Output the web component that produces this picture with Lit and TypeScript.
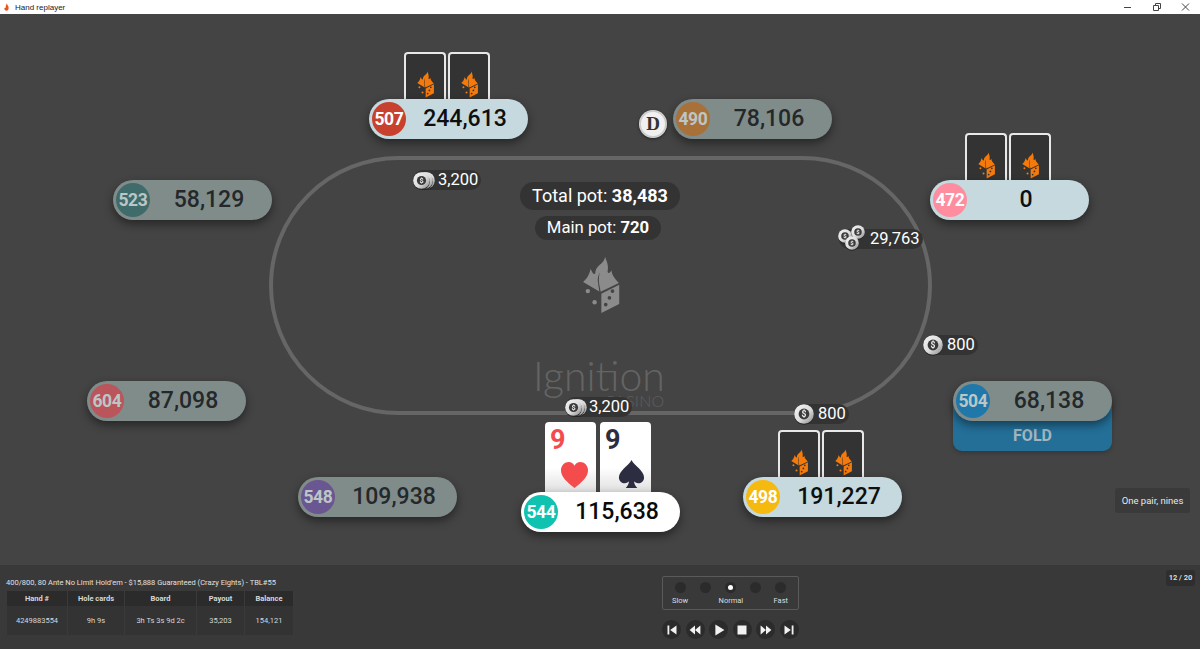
import { LitElement, html, css, svg } from "lit";
import { customElement } from "lit/decorators.js";

const hole = (x: number, y: number, r: number) =>
  `M${x - r} ${y}a${r} ${r} 0 1 0 ${2 * r} 0a${r} ${r} 0 1 0 ${-2 * r} 0Z`;

const logoPath =
  "M68 95C78 86 86 76 90 56C96 70 100 74 104 70C104 56 112 48 122 40C128 34 132 28 133 20C138 34 144 46 141 60C139 70 146 72 152 60C154 74 158 80 174 98L120 124L115 97C114 88 115 78 117 66C112 78 110 88 112 96L116 123Z";
const facePath =
  "M122 130L175 103L175 160L122 187Z" + hole(155, 122, 5.5) + hole(146, 142, 5.5) + hole(135, 162, 5.5);

const logo = svg`<path d=${logoPath} fill-rule="evenodd"/><path d=${facePath} fill-rule="evenodd"/><circle cx="82" cy="122" r="6.5"/><circle cx="102" cy="155" r="6.5"/>`;

interface Seat { id: string; amt: string; x: number; y: number; c: string; kind: "on" | "dim" | "hero"; backs?: boolean; fold?: boolean }
const seats: Seat[] = [
  { id: "507", amt: "244,613", x: 369, y: 85, c: "#c8402e", kind: "on", backs: true },
  { id: "490", amt: "78,106", x: 673, y: 85, c: "#a8713a", kind: "dim" },
  { id: "523", amt: "58,129", x: 113, y: 166, c: "#3f6b6b", kind: "dim" },
  { id: "472", amt: "0", x: 930, y: 166, c: "#ff8d9f", kind: "on", backs: true },
  { id: "604", amt: "87,098", x: 87, y: 367, c: "#b9555b", kind: "dim" },
  { id: "504", amt: "68,138", x: 953, y: 367, c: "#1f78a9", kind: "dim", fold: true },
  { id: "548", amt: "109,938", x: 298, y: 463, c: "#6a5690", kind: "dim" },
  { id: "498", amt: "191,227", x: 743, y: 463, c: "#f6b90f", kind: "on", backs: true },
  { id: "544", amt: "115,638", x: 521, y: 478, c: "#10c3b1", kind: "hero" },
];

interface Bet { amt: string; x: number; y: number; size: number; chips: number[][]; pad: number }
const bets: Bet[] = [
  { amt: "3,200", x: 413, y: 156, size: 17, chips: [[5, 2], [3, 2], [0, 2]], pad: 25 },
  { amt: "3,200", x: 565, y: 383, size: 17, chips: [[5, 2], [3, 2], [0, 2]], pad: 24 },
  { amt: "29,763", x: 839, y: 215, size: 14, chips: [[12, -4], [-1, 0], [6, 7]], pad: 31 },
  { amt: "800", x: 923, y: 321, size: 20, chips: [[0, 0]], pad: 24 },
  { amt: "800", x: 794, y: 390, size: 20, chips: [[0, 0]], pad: 24 },
];

const cols = ["Hand #", "Hole cards", "Board", "Payout", "Balance"];
const vals = ["4249883554", "9h 9s", "3h Ts 3s 9d 2c", "35,203", "154,121"];
const speeds = [false, false, true, false, false];

const ctrl = [
  "M5 5h2v10H5zM15 5v10L8 10z",
  "M10 5v10L4 10zM16 5v10l-6-5z",
  "M6 4l10 6-10 6z",
  "M5 5h10v10H5z",
  "M4 5v10l6-5zM10 5v10l6-5z",
  "M13 5h2v10h-2zM5 5v10l7-5z",
];

@customElement("app-root")
export class AppRoot extends LitElement {
  static styles = css`
    :host { display: flex; flex-direction: column; width: 1200px; height: 649px; overflow: hidden; font-family: Roboto, sans-serif; background: #444; }
    .title { height: 14px; flex: none; background: #fff; display: flex; align-items: center; padding-left: 4px; gap: 6px; font: 8px "Liberation Sans", sans-serif; color: #222; }
    .title .ico { width: 5px; height: 8px; fill: #e8541c; }
    .wins { margin-left: auto; display: flex; align-items: center; }
    .wins svg { width: 29px; height: 12px; stroke: #444; fill: none; stroke-width: 1; }
    .table { position: relative; height: 551px; flex: none; background: #444; overflow: hidden; }
    .oval { position: absolute; left: 269px; top: 142px; width: 663px; height: 259px; box-sizing: border-box; border: 4px solid #666; border-radius: 130px; }
    .mark { position: absolute; left: 578px; top: 242px; width: 46px; height: 58px; fill: #8b8b8b; }
    .brand { position: absolute; left: 533px; top: 338px; font: 300 41px/48px Lato, sans-serif; color: #646464; }
    .casino { position: absolute; left: 604px; top: 377px; font: 300 16px/20px Lato, sans-serif; color: #5f5f5f; letter-spacing: 0.3px; }
    .pot { position: absolute; width: 400px; display: flex; justify-content: center; }
    .pot span { background: #333; color: #fff; border-radius: 14px; }
    .pot b { font-weight: 700; }
    .pot.total { left: 400px; top: 168px; }
    .pot.total span { font-size: 18px; line-height: 28px; padding: 0 12px; }
    .pot.main { left: 398px; top: 202px; }
    .pot.main span { font-size: 16.7px; line-height: 24px; padding: 0 12px; }
    .seat { position: absolute; width: 159px; }
    .pill { position: relative; height: 40px; border-radius: 20px; display: flex; align-items: center; box-shadow: 0 4px 10px rgba(0,0,0,.45); z-index: 2; }
    .on .pill { background: #c5d9de; color: #0e0e0e; }
    .dim .pill { background: #808c8a; color: #24282a; }
    .hero .pill { background: #fff; color: #0a0a0a; }
    .avatar { width: 34px; height: 34px; border-radius: 50%; margin-left: 3px; flex: none; display: flex; align-items: center; justify-content: center; color: #fff; font-size: 17.5px; font-weight: 700; letter-spacing: -0.3px; }
    .dim .avatar { color: #bcc6c6; }
    .amt { flex: 1; text-align: center; font-size: 23px; font-weight: 500; padding: 0 4px 2px 0; }
    .backs { position: absolute; left: 35px; top: -47px; display: flex; gap: 2px; z-index: 1; }
    .back { width: 42px; height: 50px; box-sizing: border-box; border: 2px solid #e8e8e8; border-bottom: 0; border-radius: 4px 4px 0 0; background: #333; display: flex; justify-content: center; padding-top: 17px; }
    .back svg { width: 19px; height: 27px; fill: #f47a0c; }
    .fold { position: absolute; left: 0; top: 19px; width: 159px; height: 51px; box-sizing: border-box; padding-top: 24px; text-align: center; background: #236f98; border-radius: 0 0 9px 9px; color: #a3b6bf; font-size: 16px; font-weight: 700; line-height: 24px; box-shadow: 0 2px 4px rgba(0,0,0,.2); }
    .cards { position: absolute; left: 24px; top: -70px; display: flex; gap: 4px; }
    .card { width: 51px; height: 76px; border-radius: 4px 4px 0 0; background: linear-gradient(#fff 60%, #d8d8d8); position: relative; }
    .rank { position: absolute; left: 5px; top: 1px; font-size: 27px; line-height: 34px; font-weight: 700; }
    .red { color: #f44c4c; fill: #f44c4c; }
    .blk { color: #2c2d41; fill: #2c2d41; }
    .card svg { position: absolute; left: 17px; top: 38px; width: 29px; height: 29px; }
    .card.red svg { left: 15px; top: 39px; }
    .bet { position: absolute; height: 20px; border-radius: 10px; background: #333; color: #fff; font-size: 16.5px; line-height: 20px; padding-right: 3px; white-space: nowrap; }
    .chip { position: absolute; filter: drop-shadow(0 1px 0 #222); }
    .dealer { position: absolute; left: 639px; top: 96px; width: 28px; height: 28px; border-radius: 50%; background: radial-gradient(#f0f0f0 58%, #c8c8c8 64%, #f4f4f4 80%, #b0b0b0); box-shadow: 0 1px 3px rgba(0,0,0,.5); color: #333; font: 700 19px/28px "Liberation Serif", serif; text-align: center; }
    .hand { position: absolute; left: 1115px; top: 474px; width: 75px; height: 25px; background: #3a3a3a; border-radius: 3px; color: #e8e8e8; font-size: 9.5px; line-height: 25px; text-align: center; }
    .bar { flex: 1; background: #393939; display: grid; grid-template-columns: 655px 144px 1fr; padding-left: 7px; position: relative; font-size: 7.5px; color: #ddd; }
    .info { padding-top: 13px; }
    .line { margin-left: -1px; font-size: 7.5px; line-height: 10px; white-space: nowrap; color: #e0e0e0; }
    .grid { margin-top: 3px; display: grid; grid-template-columns: 61px 57px 72px 48px 49px; width: 287px; text-align: center; color: #d8d8d8; }
    .grid .h { background: #2b2b2b; height: 15px; line-height: 15px; font-weight: 700; border-right: 1px solid #3a3a3a; box-sizing: border-box; }
    .grid .v { background: #333; height: 29px; line-height: 29px; border-right: 1px solid #3a3a3a; box-sizing: border-box; }
    .mid { padding-top: 11px; display: flex; flex-direction: column; width: 137px; }
    .speed { height: 34px; box-sizing: border-box; border: 1px solid #5a5a5a; border-radius: 2px; position: relative; display: flex; justify-content: space-between; padding: 5px 12px 0; }
    .sp { width: 11px; height: 11px; border-radius: 50%; background: #2b2b2b; display: flex; align-items: center; justify-content: center; }
    .sp.cur i { width: 5px; height: 5px; background: #fff; border-radius: 50%; }
    .labels { position: absolute; left: 0; right: 0; top: 19px; display: flex; justify-content: space-between; padding: 0 10px 0 9px; color: #ddd; line-height: 10px; }
    .btns { margin-top: 10px; display: flex; justify-content: space-between; }
    .btn { width: 19px; height: 19px; border-radius: 50%; background: #2b2b2b; display: flex; align-items: center; justify-content: center; }
    .btn svg { width: 18px; height: 18px; fill: #f2f2f2; }
    .count { position: absolute; right: 5px; top: 5px; width: 29px; height: 16px; background: #2e2e2e; border-radius: 3px; text-align: center; line-height: 16px; font-size: 7.5px; font-weight: 700; color: #ddd; }
  `;

  chip(p: number[], size: number) {
    return svg`<svg class="chip" style="left:${p[0]}px;top:${p[1]}px;width:${size}px;height:${size}px" viewBox="0 0 20 20">
      <defs><linearGradient id="g" x1="0" y1="0" x2="1" y2="1"><stop offset="0" stop-color="#f5f5f5"/><stop offset=".55" stop-color="#dcdcdc"/><stop offset="1" stop-color="#858585"/></linearGradient></defs>
      <circle cx="10" cy="10" r="9.8" fill="url(#g)"/>
      <circle cx="10" cy="10" r="5.4" fill="#3a3a3a"/>
      <text x="10" y="13" text-anchor="middle" font-size="8.500" font-weight="700" fill="#eee" font-family="Roboto">$</text></svg>`;
  }

  render() {
    return html`
      <div class="title">
        <svg class="ico" viewBox="0 0 12 18"><path d="M6 0C7 3 10 5 11 9C12 14 9 18 6 18C3 18 0 15 1 10C2 12 3 12 4 10C4 6 6 4 6 0Z"/></svg>
        <span>Hand replayer</span>
        <div class="wins">
          <svg viewBox="0 0 29 12"><path d="M11 6.500h7"/></svg>
          <svg viewBox="0 0 29 12"><path d="M11.500 4.500h5v5h-5zM13.500 4.500V2.500h5v5h-2"/></svg>
          <svg viewBox="0 0 29 12"><path d="M11 2.500l7 7M18 2.500l-7 7"/></svg>
        </div>
      </div>
      <div class="table">
        <div class="oval"></div>
        <svg class="mark" viewBox="60 18 122 172">${logo}</svg>
        <div class="brand">Ignition</div>
        <div class="casino">CASINO</div>
        <div class="pot total"><span>Total pot: <b>38,483</b></span></div>
        <div class="pot main"><span>Main pot: <b>720</b></span></div>
        <div class="dealer">D</div>
        ${bets.map((b) => html`
          <div class="bet" style="left:${b.x}px;top:${b.y}px;padding-left:${b.pad}px">
            ${b.chips.map((c) => this.chip(c, b.size))}${b.amt}
          </div>`)}
        ${seats.map((s) => html`
          <div class="seat ${s.kind}" style="left:${s.x}px;top:${s.y}px">
            ${s.backs ? html`<div class="backs">${[0, 1].map(() => html`<div class="back"><svg viewBox="60 18 122 172">${logo}</svg></div>`)}</div>` : ""}
            ${s.kind === "hero" ? html`<div class="cards">
              <div class="card red"><span class="rank">9</span><svg viewBox="0 0 30 30"><path d="M15 28C8 22 1 17 1 9.500C1 4.500 5 1 9 1C11.500 1 14 2.500 15 5C16 2.500 18.500 1 21 1C25 1 29 4.500 29 9.500C29 17 22 22 15 28Z"/></svg></div>
              <div class="card blk"><span class="rank">9</span><svg viewBox="0 0 30 30"><path d="M15 0C18 6 28 11 28 18C28 22 25 24 22 24C20 24 18.500 23 17.500 22C18 25 19 27 21 29H9C11 27 12 25 12.500 22C11.500 23 10 24 8 24C5 24 2 22 2 18C2 11 12 6 15 0Z"/></svg></div>
            </div>` : ""}
            ${s.fold ? html`<div class="fold">FOLD</div>` : ""}
            <div class="pill">
              <div class="avatar" style="background:${s.c}">${s.id}</div>
              <div class="amt">${s.amt}</div>
            </div>
          </div>`)}
        <div class="hand">One pair, nines</div>
      </div>
      <div class="bar">
        <div class="info">
          <div class="line">400/800, 80 Ante No Limit Hold'em - $15,888 Guaranteed (Crazy Eights) - TBL#55</div>
          <div class="grid">
            ${cols.map((c) => html`<div class="h">${c}</div>`)}
            ${vals.map((v) => html`<div class="v">${v}</div>`)}
          </div>
        </div>
        <div class="mid">
          <div class="speed">
            ${speeds.map((on) => html`<div class="sp ${on ? "cur" : ""}"><i></i></div>`)}
            <div class="labels"><span>Slow</span><span>Normal</span><span>Fast</span></div>
          </div>
          <div class="btns">
            ${ctrl.map((d) => html`<div class="btn"><svg viewBox="0 0 20 20"><path d=${d}/></svg></div>`)}
          </div>
        </div>
        <div class="count">12 / 20</div>
      </div>
    `;
  }
}
